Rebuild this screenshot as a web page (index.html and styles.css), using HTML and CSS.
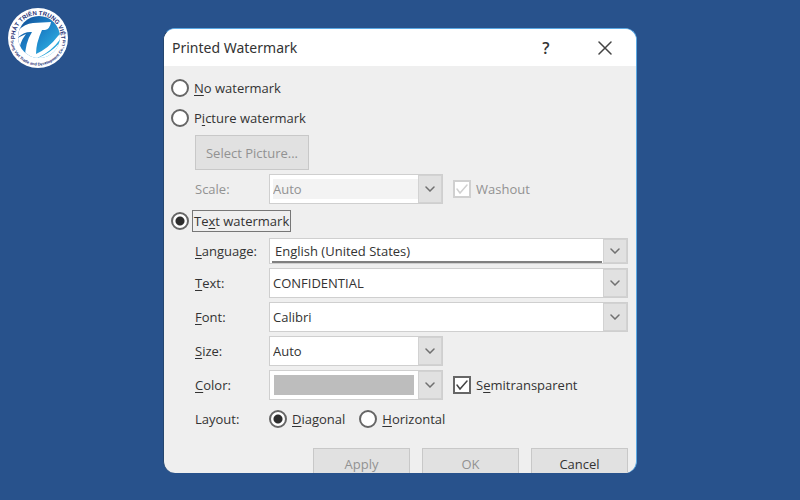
FILE: index.html
```html
<!DOCTYPE html>
<html lang="en">
<head>
<meta charset="utf-8">
<meta name="viewport" content="width=device-width, initial-scale=1">
<title>Printed Watermark</title>
<link rel="stylesheet" href="styles.css">
</head>
<body>
<svg class="logo" viewBox="0 0 62 62" role="img" aria-label="Phát Triển Trung Việt">
  <defs>
    <linearGradient id="globe" x1="0" y1="0" x2="1" y2="1">
      <stop offset="0" stop-color="#12498f"/>
      <stop offset=".45" stop-color="#1b7fc6"/>
      <stop offset="1" stop-color="#35c0ea"/>
    </linearGradient>
    <clipPath id="disc"><circle cx="32" cy="30" r="21"/></clipPath>
    <path id="arc-top" d="M8 31a23 23 0 0 1 46 0"/>
    <path id="arc-bottom" d="M3.500 31a27.500 27.500 0 0 0 55 0"/>
  </defs>
  <circle cx="31" cy="31" r="30" fill="#fff"/>
  <circle cx="32" cy="30" r="21" fill="url(#globe)"/>
  <g clip-path="url(#disc)" fill="#fff">
    <path d="M8 27Q16 17 26 16L44 15Q43 22 38 23L35 23Q29 36 29 47Q42 41 51 29L56 24L56 28Q46 45 28 52L18 51Q18 36 25 25Q17 24 9 32Z"/>
    <path d="M28 52Q44 47 56 32L58 38Q46 50 30 54Z"/>
    <path d="M8 32L19 27Q12 36 12 46L8 44Z"/>
  </g>
  <text class="logo-name"><textPath href="#arc-top" startOffset="50%">PHÁT TRIỂN TRUNG VIỆT</textPath></text>
  <text class="logo-sub"><textPath href="#arc-bottom" startOffset="50%">Trung Viet Trade and Development Co., Ltd</textPath></text>
</svg>

<main class="dialog">
  <header class="titlebar">
    <h1>Printed Watermark</h1>
    <button class="title-button" type="button" aria-label="Help">?</button>
    <button class="title-button" type="button" aria-label="Close">
      <svg class="close" viewBox="0 0 14 14"><path d="M1 1l12 12M13 1L1 13"/></svg>
    </button>
  </header>

  <form class="content">
    <label class="choice"><input type="radio" name="kind"><span><u>N</u>o watermark</span></label>
    <label class="choice"><input type="radio" name="kind"><span>P<u>i</u>cture watermark</span></label>

    <div class="group">
      <button class="button select-picture" type="button" disabled>Select Picture...</button>
      <div class="row disabled">
        <label for="scale">Scale:</label>
        <div class="combo short">
          <select id="scale" disabled><option>Auto</option></select>
          <span class="arrow"><svg viewBox="0 0 10 6"><path d="M1 1l4 4 4-4"/></svg></span>
        </div>
        <label class="check"><input type="checkbox" checked disabled><svg viewBox="0 0 18 18"><path d="M4 9l3 4 7-8"/></svg><span>Washout</span></label>
      </div>
    </div>

    <label class="choice"><input type="radio" name="kind" checked><span class="focused">Te<u>x</u>t watermark</span></label>

    <div class="group">
      <div class="row">
        <label for="language"><u>L</u>anguage:</label>
        <div class="combo language">
          <select id="language"><option>English (United States)</option></select>
          <span class="arrow"><svg viewBox="0 0 10 6"><path d="M1 1l4 4 4-4"/></svg></span>
        </div>
      </div>
      <div class="row">
        <label for="text"><u>T</u>ext:</label>
        <div class="combo">
          <select id="text"><option>CONFIDENTIAL</option></select>
          <span class="arrow"><svg viewBox="0 0 10 6"><path d="M1 1l4 4 4-4"/></svg></span>
        </div>
      </div>
      <div class="row">
        <label for="font"><u>F</u>ont:</label>
        <div class="combo">
          <select id="font"><option>Calibri</option></select>
          <span class="arrow"><svg viewBox="0 0 10 6"><path d="M1 1l4 4 4-4"/></svg></span>
        </div>
      </div>
      <div class="row">
        <label for="size"><u>S</u>ize:</label>
        <div class="combo short">
          <select id="size"><option>Auto</option></select>
          <span class="arrow"><svg viewBox="0 0 10 6"><path d="M1 1l4 4 4-4"/></svg></span>
        </div>
      </div>
      <div class="row">
        <label for="color"><u>C</u>olor:</label>
        <div class="combo short">
          <select id="color"><option value="silver"></option></select>
          <span class="swatch"></span>
          <span class="arrow"><svg viewBox="0 0 10 6"><path d="M1 1l4 4 4-4"/></svg></span>
        </div>
        <label class="check"><input type="checkbox" checked><svg viewBox="0 0 18 18"><path d="M4 9l3 4 7-8"/></svg><span>S<u>e</u>mitransparent</span></label>
      </div>
      <div class="row" role="radiogroup" aria-labelledby="layout">
        <span id="layout">Layout:</span>
        <div class="options">
          <label class="choice"><input type="radio" name="layout" checked><span><u>D</u>iagonal</span></label>
          <label class="choice"><input type="radio" name="layout"><span><u>H</u>orizontal</span></label>
        </div>
      </div>
    </div>

    <footer class="actions">
      <button class="button" type="button" disabled>Apply</button>
      <button class="button" type="button" disabled>OK</button>
      <button class="button" type="button">Cancel</button>
    </footer>
  </form>
</main>
</body>
</html>
```
FILE: styles.css
```css
* {
  box-sizing: border-box;
}

body {
  margin: 0;
  padding: 28px 16px;
  background: #28528c;
  color: #333;
  font: 13px/18px "Open Sans", "Noto Sans", sans-serif;
}

button,
select {
  font: inherit;
  color: inherit;
}

u {
  text-underline-offset: 2px;
}

.logo {
  position: absolute;
  top: 7px;
  left: 7px;
  width: 62px;
  height: 62px;
}

.logo text {
  font-family: "Liberation Sans", sans-serif;
  font-weight: bold;
  fill: #1c2f74;
  text-anchor: middle;
}

.logo-name {
  font-size: 6px;
}

.logo-sub {
  font-size: 4px;
}

.dialog {
  max-width: 474px;
  margin: 0 auto;
  overflow: hidden;
  border: 1px solid #5aa9e4;
  border-left-color: #24466f;
  border-bottom: 0;
  border-radius: 12px;
  background: #efefef;
}

.titlebar {
  display: flex;
  align-items: center;
  height: 37px;
  padding: 0 9px 0 8px;
  background: #fff;
}

.titlebar h1 {
  flex: 1;
  margin: 0;
  font: 14px/20px "Noto Sans", "Open Sans", sans-serif;
}

.title-button {
  display: flex;
  align-items: center;
  justify-content: center;
  width: 44px;
  height: 32px;
  margin-left: 15px;
  padding: 0;
  border: 0;
  background: none;
  font-size: 16px;
  font-weight: 600;
}

.close {
  width: 14px;
  height: 14px;
}

svg path {
  stroke-linecap: round;
}

.close path,
.arrow path,
.check path {
  fill: none;
  stroke: #444;
  stroke-width: 1.5;
}

.content {
  padding: 7px 8px 0 7px;
}

.choice {
  display: flex;
  align-items: center;
  gap: 5px;
  height: 30px;
}

.choice input {
  appearance: none;
  width: 18px;
  height: 18px;
  margin: 0;
  border: 2px solid #666;
  border-radius: 50%;
  background: #fff;
}

.choice input:checked {
  background: radial-gradient(circle, #2d2d2d 4px, #fff 5px);
}

.choice .focused {
  outline: 1px solid #777;
  outline-offset: 1px;
}

.group {
  display: flex;
  flex-direction: column;
  gap: 4px;
  padding: 2px 0 2px 24px;
}

.button {
  padding: 0;
  border: 1px solid #c8c8c8;
  background: #e1e1e1;
}

.button:disabled {
  color: #929292;
}

.select-picture {
  width: 114px;
  height: 35px;
}

.row {
  display: grid;
  grid-template-columns: 74px 1fr;
  align-items: center;
}

.row:has(.short) {
  grid-template-columns: 74px 174px 1fr;
}

.row.disabled {
  color: #929292;
}

.combo {
  display: grid;
  grid-template-columns: 1fr 24px;
  height: 30px;
  border: 1px solid #cfcfcf;
  background: #fff;
}

.combo select {
  grid-area: 1 / 1 / 2 / 3;
  appearance: none;
  width: 100%;
  padding: 0 28px 0 3px;
  border: 0;
  background: none;
}

.combo select:disabled {
  margin: 4px 3px;
  padding: 0;
  width: auto;
  background: #f3f3f3;
  opacity: 1;
}

.combo .arrow {
  grid-area: 1 / 2;
  display: flex;
  align-items: center;
  justify-content: center;
  border: 1px solid #d2d2d2;
  background: #e1e1e1;
  pointer-events: none;
}

.arrow svg {
  width: 10px;
  height: 6px;
}

.arrow path {
  stroke: #707070;
}

.combo.language {
  height: 26px;
}

.language select {
  padding-left: 5px;
  background: linear-gradient(#808080, #808080) 2px 100% / calc(100% - 27px) 2px no-repeat;
}

.swatch {
  grid-area: 1 / 1;
  margin: 4px;
  background: #bdbdbd;
  pointer-events: none;
}

.check {
  display: grid;
  grid-template-columns: 18px 1fr;
  align-items: center;
  gap: 5px;
  padding-left: 10px;
}

.check input {
  grid-area: 1 / 1;
  appearance: none;
  width: 18px;
  height: 18px;
  margin: 0;
  border: 2px solid #666;
  background: #fff;
}

.check svg {
  grid-area: 1 / 1;
  width: 18px;
  height: 18px;
  pointer-events: none;
}

.check input:disabled {
  border-color: #d0d0d0;
}

.check input:disabled + svg path {
  stroke: #d0d0d0;
}

.options {
  display: flex;
  gap: 14px;
}

.actions {
  display: flex;
  justify-content: flex-end;
  gap: 12px;
  margin-top: 12px;
}

.actions .button {
  width: 97px;
  padding-top: 6px;
  border-bottom: 0;
}
```
